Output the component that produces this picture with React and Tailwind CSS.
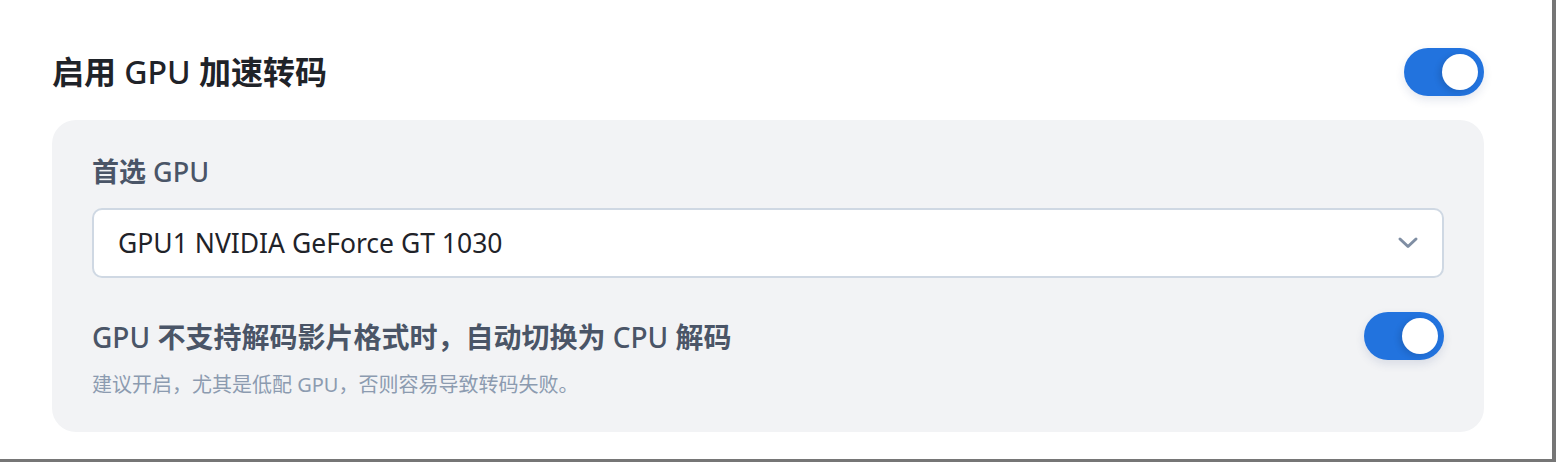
import React from "react";

const FONT = { fontFamily: '"Noto Sans", "Noto Sans CJK SC", sans-serif' };

function Toggle() {
  return (
    <div className="flex h-[48px] w-[80px] shrink-0 items-center justify-end rounded-full bg-[#2273de] pr-[6px] shadow-[0_4px_10px_rgba(30,60,120,0.12)]">
      <div className="h-[36px] w-[36px] rounded-full bg-white shadow-[-3px_2px_6px_rgba(0,0,0,0.12)]" />
    </div>
  );
}

export default function App() {
  return (
    <div
      className="h-[462px] w-[1556px] overflow-hidden border-b-[3px] border-r-[4px] border-[#767676] bg-white"
      style={FONT}
    >
      <div className="ml-[52px] w-[1432px] pt-[48px]">
        <div className="flex h-[48px] items-center justify-between">
          <h1 className="text-[32px] font-bold leading-none text-[#1f2329]">
            启用 <span className="font-medium">GPU</span> 加速转码
          </h1>
          <Toggle />
        </div>

        <div className="mt-[24px] flex h-[312px] flex-col rounded-[24px] bg-[#f2f3f5] px-[40px] pt-[35px]">
          <div className="text-[27px] font-bold leading-[34px] text-[#4a5567]">
            首选 <span className="font-medium">GPU</span>
          </div>
          <div className="mt-[19px] flex h-[70px] items-center justify-between rounded-[10px] border-2 border-[#cfd8e3] bg-white pl-[24px] pr-[22px]">
            <span className="text-[26.5px] leading-none text-[#1f2329]">
              GPU1 NVIDIA GeForce GT 1030
            </span>
            <svg width="24" height="24" viewBox="0 0 24 24" fill="none">
              <path
                d="M4 8l8 7.5L20 8"
                stroke="#7f8ea3"
                strokeWidth="3"
                strokeLinecap="round"
                strokeLinejoin="round"
              />
            </svg>
          </div>
          <div className="mt-[34px] flex items-start justify-between">
            <div className="flex flex-col">
              <div className="text-[28px] font-bold leading-[50px] text-[#4a5567]">
                <span className="font-medium">GPU</span> 不支持解码影片格式时，自动切换为{" "}
                <span className="font-medium">CPU</span> 解码
              </div>
              <div className="mt-[9px] text-[20px] leading-[28px] text-[#8c9bb0]">
                建议开启，尤其是低配 GPU，否则容易导致转码失败。
              </div>
            </div>
            <Toggle />
          </div>
        </div>
      </div>
    </div>
  );
}
